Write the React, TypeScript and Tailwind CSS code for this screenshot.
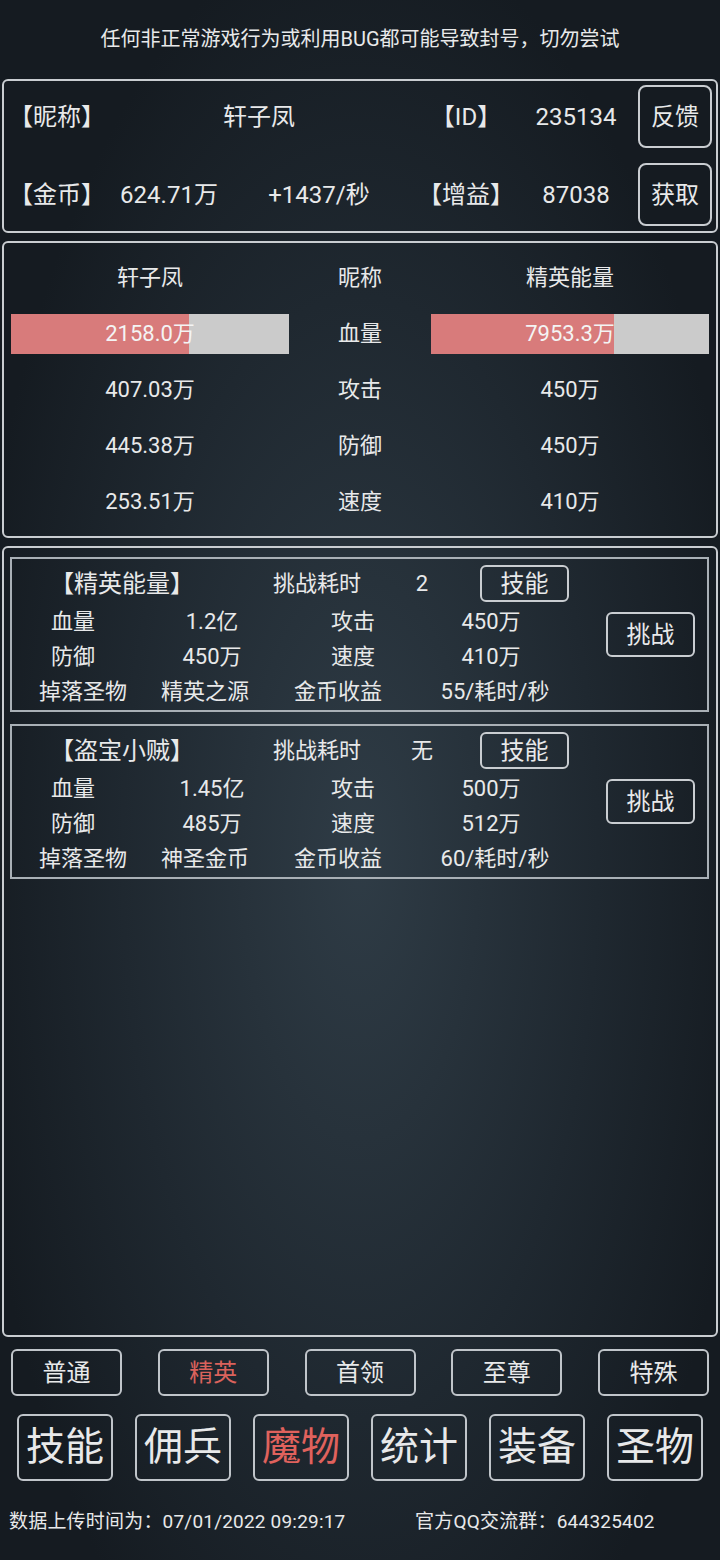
import React from "react";

const FONT = "font-['Roboto','Noto_Sans_CJK_SC',sans-serif]";

type Cell = { text: string; w: number };

function CardRow({ cells }: { cells: Cell[] }) {
  return (
    <div className="flex h-[35px] items-center text-[22px] leading-none">
      {cells.map((c, i) => (
        <div key={i} style={{ width: c.w }} className="text-center whitespace-nowrap">
          {c.text}
        </div>
      ))}
    </div>
  );
}

type Monster = {
  name: string;
  time: string;
  hp: string;
  atk: string;
  def: string;
  spd: string;
  drop: string;
  gold: string;
};

const monsters: Monster[] = [
  { name: "【精英能量】", time: "2", hp: "1.2亿", atk: "450万", def: "450万", spd: "410万", drop: "精英之源", gold: "55/耗时/秒" },
  { name: "【盗宝小贼】", time: "无", hp: "1.45亿", atk: "500万", def: "485万", spd: "512万", drop: "神圣金币", gold: "60/耗时/秒" },
];

function MonsterCard({ m }: { m: Monster }) {
  return (
    <div className="flex h-[155px] border-2 border-[#a9b0b6] pt-[6px]">
      <div className="w-[594px]">
        <div className="flex h-[37px] items-center text-[22px] leading-none">
          <div className="w-[220px] text-center text-[24px]">{m.name}</div>
          <div className="w-[170px] text-center">挑战耗时</div>
          <div className="w-[40px] text-center">{m.time}</div>
          <div className="ml-[38px] flex h-[37px] w-[89px] items-center justify-center rounded-[6px] border-2 border-[#c9cdd1] text-[24px]">
            技能
          </div>
        </div>
        <div className="h-[2px]" />
        <CardRow cells={[{ text: "血量", w: 122 }, { text: m.hp, w: 156 }, { text: "攻击", w: 126 }, { text: m.atk, w: 150 }]} />
        <CardRow cells={[{ text: "防御", w: 122 }, { text: m.def, w: 156 }, { text: "速度", w: 126 }, { text: m.spd, w: 150 }]} />
        <CardRow cells={[{ text: "掉落圣物", w: 142 }, { text: m.drop, w: 102 }, { text: "金币收益", w: 164 }, { text: m.gold, w: 150 }]} />
      </div>
      <div className="flex items-center pb-[6px]">
        <div className="flex h-[45px] w-[89px] items-center justify-center rounded-[6px] border-2 border-[#c9cdd1] text-[24px] leading-none">
          挑战
        </div>
      </div>
    </div>
  );
}

function Bar({ value, pct }: { value: string; pct: number }) {
  return (
    <div className="relative h-[40px] w-[278px] bg-[#cbcbcb]">
      <div className="h-full bg-[#d87b7b]" style={{ width: `${pct}%` }} />
      <div className="absolute inset-0 flex items-center justify-center text-[22px] leading-none text-[#f4f4f4]">
        {value}
      </div>
    </div>
  );
}

function StatRow({ left, label, right }: { left: React.ReactNode; label: string; right: React.ReactNode }) {
  return (
    <div className="flex h-[56px] items-center text-[22px] leading-none">
      <div className="flex w-[278px] justify-center">{left}</div>
      <div className="w-[142px] text-center">{label}</div>
      <div className="flex w-[278px] justify-center">{right}</div>
    </div>
  );
}

export default function App() {
  const tabs = ["普通", "精英", "首领", "至尊", "特殊"];
  const navs = ["技能", "佣兵", "魔物", "统计", "装备", "圣物"];

  return (
    <div
      className={`${FONT} h-[1560px] w-[720px] overflow-hidden bg-[radial-gradient(ellipse_55%_60%_at_50%_55%,#2f3c46_0%,#1f2830_60%,#151b21_100%)] text-[#e8e9ea]`}
    >
      {/* warning */}
      <div className="flex h-[79px] items-start justify-center pt-[29px] text-[20px] leading-none">
        任何非正常游戏行为或利用BUG都可能导致封号，切勿尝试
      </div>

      {/* player info */}
      <div className="mx-[2px] h-[154px] rounded-[6px] border-2 border-[#c9cdd1] pt-[4px]">
        <div className="flex h-[63px] items-center text-[24px] leading-none">
          <div className="w-[106px] text-center">【昵称】</div>
          <div className="w-[298px] text-center">轩子凤</div>
          <div className="w-[116px] text-center">【ID】</div>
          <div className="w-[104px] text-center">235134</div>
          <div className="ml-[10px] flex h-[63px] w-[74px] items-center justify-center rounded-[8px] border-2 border-[#c9cdd1]">
            反馈
          </div>
        </div>
        <div className="mt-[15px] flex h-[63px] items-center text-[24px] leading-none">
          <div className="w-[106px] text-center">【金币】</div>
          <div className="w-[118px] text-center">624.71万</div>
          <div className="w-[182px] text-center">+1437/秒</div>
          <div className="w-[112px] text-center">【增益】</div>
          <div className="w-[108px] text-center">87038</div>
          <div className="ml-[8px] flex h-[63px] w-[74px] items-center justify-center rounded-[8px] border-2 border-[#c9cdd1]">
            获取
          </div>
        </div>
      </div>

      {/* battle compare */}
      <div className="mx-[2px] mt-[8px] h-[297px] rounded-[6px] border-2 border-[#c9cdd1] px-[7px] pt-[7px]">
        <StatRow left="轩子凤" label="昵称" right="精英能量" />
        <StatRow left={<Bar value="2158.0万" pct={64} />} label="血量" right={<Bar value="7953.3万" pct={66} />} />
        <StatRow left="407.03万" label="攻击" right="450万" />
        <StatRow left="445.38万" label="防御" right="450万" />
        <StatRow left="253.51万" label="速度" right="410万" />
      </div>

      {/* monster list */}
      <div className="mx-[2px] mt-[8px] flex h-[791px] flex-col gap-[12px] rounded-[6px] border-2 border-[#c9cdd1] pl-[6px] pr-[7px] pt-[9px]">
        {monsters.map((m) => (
          <MonsterCard key={m.name} m={m} />
        ))}
      </div>

      {/* category tabs */}
      <div className="mt-[12px] flex justify-between px-[11px]">
        {tabs.map((t) => (
          <div
            key={t}
            className={`flex h-[47px] w-[111px] items-center justify-center rounded-[6px] border-2 border-[#c0c5ca] text-[24px] leading-none ${
              t === "精英" ? "text-[#d9625c]" : ""
            }`}
          >
            {t}
          </div>
        ))}
      </div>

      {/* nav */}
      <div className="mt-[18px] flex justify-between px-[17px]">
        {navs.map((n) => (
          <div
            key={n}
            className={`flex h-[67px] w-[96px] items-center justify-center rounded-[6px] border-2 border-[#c0c5ca] text-[39px] leading-none ${
              n === "魔物" ? "text-[#e0625d]" : ""
            }`}
          >
            {n}
          </div>
        ))}
      </div>

      {/* footer */}
      <div className="mt-[29px] flex h-[22px] items-center text-[19px] leading-none">
        <div className="w-[415px] pl-[9px] tracking-[0.2px]">数据上传时间为：07/01/2022 09:29:17</div>
        <div className="tracking-[0.2px]">官方QQ交流群：644325402</div>
      </div>
    </div>
  );
}
